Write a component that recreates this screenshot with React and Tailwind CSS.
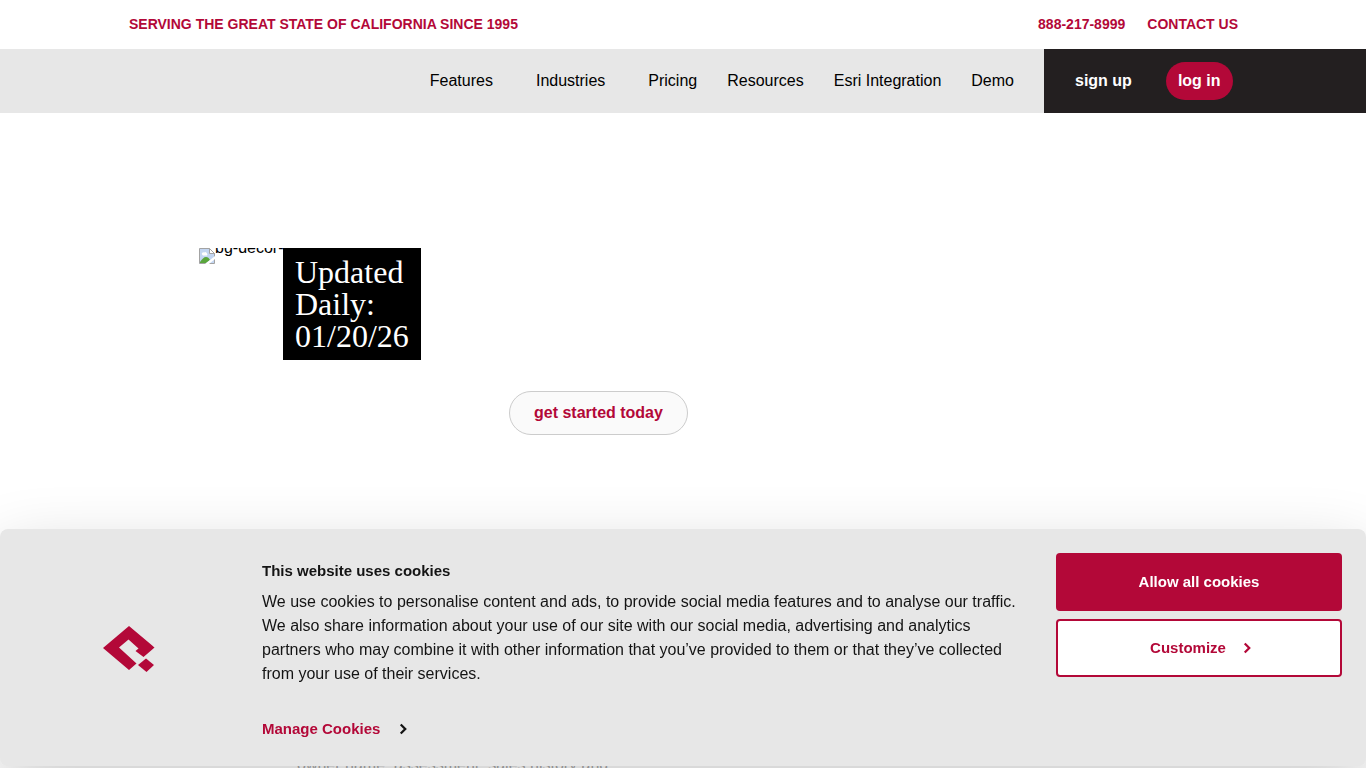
import React from 'react';
import { ChevronRight } from 'lucide-react';

const navLinks = [
  { label: 'Features', hasMenu: true },
  { label: 'Industries', hasMenu: true },
  { label: 'Pricing' },
  { label: 'Resources' },
  { label: 'Esri Integration' },
  { label: 'Demo' },
];

function TopBar() {
  return (
    <div className="flex h-[49px] items-center justify-between pb-0.5 pl-[129px] pr-32 text-sm font-bold text-[#b30838]">
      <p>SERVING THE GREAT STATE OF CALIFORNIA SINCE 1995</p>
      <div className="flex gap-[22px]">
        <a href="tel:888-217-8999">888-217-8999</a>
        <a href="#contact">CONTACT US</a>
      </div>
    </div>
  );
}

function Header() {
  return (
    <header className="flex h-16 bg-[#e7e7e7]">
      <nav className="flex flex-1 items-center justify-end gap-[30px] pr-[30px] text-base text-black">
        {navLinks.map(({ label, hasMenu }) => (
          <a key={label} href="#nav" className={hasMenu ? 'pr-[13px]' : ''}>
            {label}
          </a>
        ))}
      </nav>
      <div className="flex w-[322px] items-center bg-[#231f20] pl-[31px] font-bold text-white">
        <a href="#signup">sign up</a>
        <a href="#login" className="ml-[34px] rounded-full bg-[#b30838] px-3 py-[7px]">
          log in
        </a>
      </div>
    </header>
  );
}

// Placeholder shown when the hero decoration is missing
function BrokenImage() {
  return (
    <svg width="16" height="16" viewBox="0 0 16 16" className="shrink-0" aria-hidden="true">
      <path d="M.5.5h10l5 5v10H.5z" fill="#c3d6f2" stroke="#a3a3a3" />
      <path d="M1 15v-1c2-3 4-5 6-5s3 1 4 3l-4 3z" fill="#5aa63c" />
      <path d="M3 6.500a1.500 1.500 0 0 1 2-2 2 2 0 0 1 3 1 1.500 1.500 0 0 1 0 2H4z" fill="#fff" />
      <path d="M6 16 16 8v3l-6 5z" fill="#fff" />
      <path d="M10.500.5v5h5z" fill="#fff" stroke="#a3a3a3" />
    </svg>
  );
}

function Hero() {
  return (
    <section className="px-[199px] pt-[135px]">
      <div className="flex items-start">
        <div className="flex h-[18px] w-[84px] overflow-hidden">
          <BrokenImage />
          <span className="-mt-3 whitespace-nowrap text-base text-black">bg-decor-</span>
        </div>
        <h1 className="w-[138px] bg-black px-3 py-2 font-['Liberation_Serif',serif] text-[32px] leading-8 text-white">
          Updated Daily: 01/20/26
        </h1>
      </div>
      <a
        href="#start"
        className="ml-[310px] mt-[31px] inline-flex h-11 items-center rounded-full border border-[#ccc] bg-[#fafafa] px-6 font-bold text-[#b30838]"
      >
        get started today
      </a>
      <p className="ml-[98px] mt-[318px] whitespace-nowrap text-base text-[#aaa]">
        owner name, assessment, sales history and
      </p>
    </section>
  );
}

function Logo() {
  return (
    <svg width="52" height="47" viewBox="0 0 52 47" fill="#b30838" aria-hidden="true">
      <path d="M26 0 51.500 21.500 40.500 31 32.500 25 35.500 22.500 25.500 13.500 16 21.500 33.500 37.500 26 44 0 22z" />
      <path d="M43 32.500 51 39 43.500 46 35 39z" />
    </svg>
  );
}

function CookieBanner() {
  return (
    <div
      role="dialog"
      aria-labelledby="cookie-title"
      className="fixed inset-x-0 bottom-0.5 flex h-[237px] rounded-lg bg-[#e7e7e7] px-6 pt-6 text-[15px] text-[#141414] shadow-[0_24px_68px_rgba(0,0,0,0.2)]"
    >
      <div className="flex w-[238px] shrink-0 justify-center pr-7 pt-[73px]">
        <Logo />
      </div>
      <div className="min-w-0 flex-1 pr-6 pt-1.5">
        <h2 id="cookie-title" className="font-bold leading-6">This website uses cookies</h2>
        <p className="mt-[7px] text-base leading-6">
          We use cookies to personalise content and ads, to provide social media features and to analyse our traffic. We also share information about your use of our site with our social media, advertising and analytics partners who may combine it with other information that you’ve provided to them or that they’ve collected from your use of their services.
        </p>
        <a href="#manage" className="mt-[31px] inline-flex items-center gap-3.5 font-bold leading-6 text-[#b30838]">
          Manage Cookies
          <ChevronRight size={18} strokeWidth={3} strokeLinecap="butt" strokeLinejoin="miter" className="text-[#141414]" />
        </a>
      </div>
      <div className="flex w-[286px] shrink-0 flex-col gap-2 font-bold">
        <button className="h-[58px] rounded bg-[#b30838] text-white">Allow all cookies</button>
        <button className="flex h-[58px] items-center justify-center gap-3 rounded border-2 border-[#b30838] bg-white pl-2 text-[#b30838]">
          Customize
          <ChevronRight size={18} strokeWidth={3} strokeLinecap="butt" strokeLinejoin="miter" />
        </button>
      </div>
    </div>
  );
}

export default function App() {
  return (
    <div className="h-screen overflow-hidden bg-white font-['Liberation_Sans',Arial,sans-serif]">
      <TopBar />
      <Header />
      <Hero />
      <CookieBanner />
    </div>
  );
}
